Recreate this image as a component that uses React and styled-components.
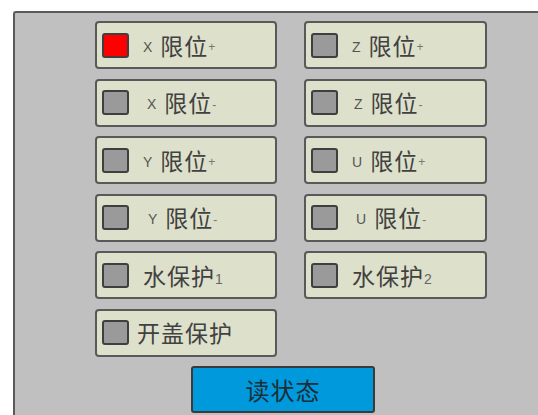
import React from 'react'
import styled, { createGlobalStyle } from 'styled-components'

const GlobalStyle = createGlobalStyle`
  html, body {
    margin: 0;
    padding: 0;
    background: #ffffff;
    overflow: hidden;
  }
  body {
    font-family: "Noto Sans CJK SC", "Noto Sans", sans-serif;
  }
`

const limits = [
  { axis: 'X', name: '限位', sign: '+', on: true },
  { axis: 'Z', name: '限位', sign: '+' },
  { axis: 'X', name: '限位', sign: '-', shift: 4 },
  { axis: 'Z', name: '限位', sign: '-', shift: 2 },
  { axis: 'Y', name: '限位', sign: '+' },
  { axis: 'U', name: '限位', sign: '+' },
  { axis: 'Y', name: '限位', sign: '-', shift: 5 },
  { axis: 'U', name: '限位', sign: '-', shift: 4 },
  { name: '水保护', sub: '1' },
  { name: '水保护', sub: '2' },
  { name: '开盖保护', tight: true },
]

function App() {
  return (
    <>
      <GlobalStyle />
      <Panel>
        <Grid>
          {limits.map((item, i) => (
            <StatusButton key={i}>
              <Lamp on={item.on} />
              <Label shift={item.shift || 0} tight={item.tight}>
                {item.axis && <Axis>{item.axis}</Axis>}
                <Name>{item.name}</Name>
                {item.sign && <Sign>{item.sign}</Sign>}
                {item.sub && <Sub>{item.sub}</Sub>}
              </Label>
            </StatusButton>
          ))}
          <ReadButton>读状态</ReadButton>
        </Grid>
      </Panel>
    </>
  )
}

export default App

const Panel = styled.div`
  margin: 11px 0 0 13px;
  height: 420px;
  background: #c0c0c0;
  border-top: 2px solid #5a5a5a;
  border-left: 2px solid #5a5a5a;
  border-top-left-radius: 3px;
  box-sizing: border-box;
`

const Grid = styled.div`
  display: grid;
  grid-template-columns: 182px 183px;
  column-gap: 27px;
  row-gap: 9.5px;
  padding: 8px 0 0 80px;
`

const StatusButton = styled.div`
  height: 48px;
  box-sizing: border-box;
  display: flex;
  align-items: center;
  padding-left: 5px;
  background: #dde0ca;
  border: 2px solid #595959;
  border-radius: 4px;
`

const Lamp = styled.div`
  width: 27px;
  height: 25px;
  box-sizing: border-box;
  flex-shrink: 0;
  background: ${props => props.on ? '#ff0000' : '#9a9a9a'};
  border: 2px solid #3f3f3f;
  border-radius: 3px;
`

const Label = styled.div`
  display: flex;
  align-items: center;
  margin-left: ${props => (props.tight ? 8 : 14) + props.shift}px;
  color: #414141;
`

const Axis = styled.span`
  font-family: "Liberation Sans", "DejaVu Sans", sans-serif;
  font-size: 14px;
  margin: 3px 8px 0 0;
  color: #555;
`

const Name = styled.span`
  font-size: 23px;
  line-height: 1;
  letter-spacing: 1px;
`

const Sign = styled.span`
  font-family: "Liberation Sans", "DejaVu Sans", sans-serif;
  font-size: 12px;
  color: #777;
  margin-top: 4px;
`

const Sub = styled.span`
  font-family: "Liberation Sans", "DejaVu Sans", sans-serif;
  font-size: 14px;
  color: #666;
  margin-top: 8px;
`

const ReadButton = styled.div`
  grid-column: 1 / span 2;
  margin-left: 96px;
  width: 184px;
  height: 47px;
  box-sizing: border-box;
  display: flex;
  align-items: center;
  justify-content: center;
  background: #0099dc;
  border: 2px solid #3a3a3a;
  border-radius: 3px;
  font-size: 24px;
  letter-spacing: 1px;
  color: #1c2e38;
`
